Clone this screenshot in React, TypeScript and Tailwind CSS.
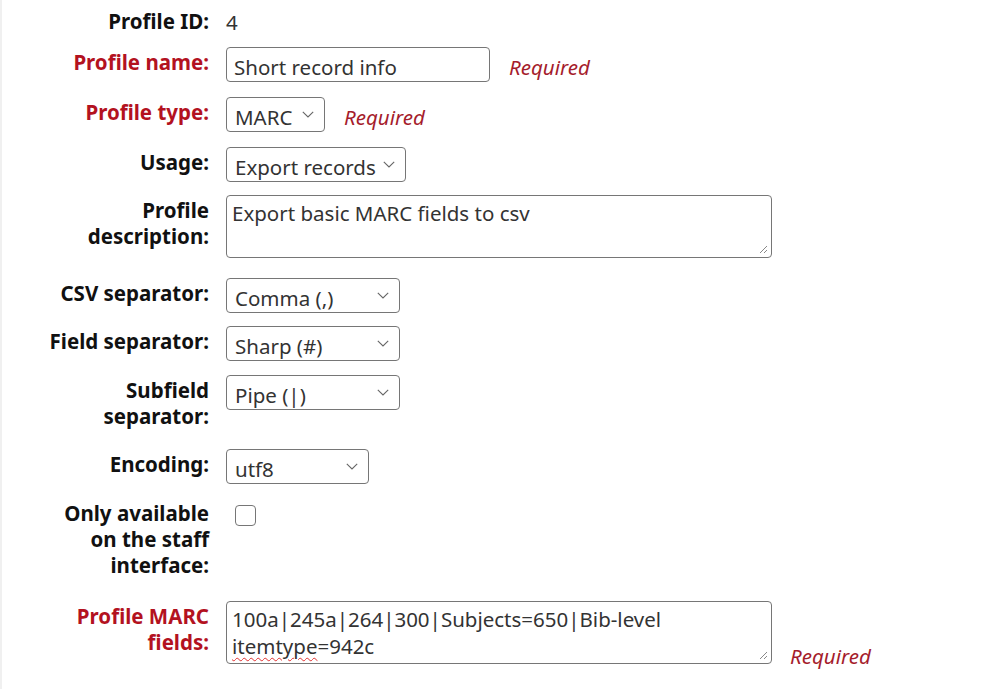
import React from "react";

const FONT = "font-['Noto_Sans','Liberation_Sans',sans-serif]";

function Chevron() {
  return (
    <svg width="12" height="7" viewBox="0 0 12 7" className="shrink-0">
      <polyline points="0.8,0.8 6,6 11.2,0.8" fill="none" stroke="#666" strokeWidth="1.1" />
    </svg>
  );
}

function Grip() {
  return (
    <svg width="10" height="10" viewBox="0 0 10 10" className="absolute right-[3px] bottom-[3px]">
      <line x1="9" y1="2" x2="2" y2="9" stroke="#888" strokeWidth="1" />
      <line x1="9" y1="6" x2="6" y2="9" stroke="#888" strokeWidth="1" />
    </svg>
  );
}

function Required({ className = "" }: { className?: string }) {
  return <span className={`italic text-[#a51c2c] ${className}`}>Required</span>;
}

function Select({ value, width }: { value: string; width: string }) {
  return (
    <div className={`flex h-[35px] items-center justify-between rounded-[4px] border border-[#767676] pl-[8px] pr-[10px] text-[#333] ${width}`}>
      <span className="pt-[4px]">{value}</span>
      <Chevron />
    </div>
  );
}

function Row({
  label,
  required,
  className = "",
  children,
}: {
  label: React.ReactNode;
  required?: boolean;
  className?: string;
  children: React.ReactNode;
}) {
  return (
    <div className={`flex items-start gap-[17px] ${className}`}>
      <div
        className={`w-[207px] shrink-0 pt-[2px] text-right font-bold ${
          required ? "text-[#b3121f]" : "text-[#111]"
        }`}
      >
        {label}
      </div>
      {children}
    </div>
  );
}

export default function App() {
  return (
    <div className={`min-h-[689px] border-l-2 border-[#f0f0f0] bg-white pt-[6px] text-[20.5px] leading-[26px] ${FONT}`}>
      <Row label="Profile ID:">
        <span className="relative top-[3px] text-[#333]">4</span>
      </Row>

      <Row label="Profile name:" required className="mt-[13px]">
        <div className="flex items-center gap-[19px]">
          <div className="flex h-[35px] w-[264px] items-center rounded-[4px] border border-[#767676] px-[7px] pt-[4px] text-[#333]">
            Short record info
          </div>
          <Required className="pt-[4px]" />
        </div>
      </Row>

      <Row label="Profile type:" required className="mt-[15px]">
        <div className="flex items-center gap-[19px]">
          <Select value="MARC" width="w-[99px]" />
          <Required className="pt-[4px]" />
        </div>
      </Row>

      <Row label="Usage:" className="mt-[15px]">
        <Select value="Export records" width="w-[180px]" />
      </Row>

      <Row label={<>Profile<br />description:</>} className="mt-[13px]">
        <div className="relative h-[63px] w-[546px] rounded-[4px] border border-[#767676] px-[5px] pt-[4px] text-[#333]">
          Export basic MARC fields to csv
          <Grip />
        </div>
      </Row>

      <Row label="CSV separator:" className="mt-[20px]">
        <Select value="Comma (,)" width="w-[174px]" />
      </Row>

      <Row label="Field separator:" className="mt-[13px]">
        <Select value="Sharp (#)" width="w-[174px]" />
      </Row>

      <Row label={<>Subfield<br />separator:</>} className="mt-[14px]">
        <Select value="Pipe (|)" width="w-[174px]" />
      </Row>

      <Row label="Encoding:" className="mt-[20px]">
        <Select value="utf8" width="w-[143px]" />
      </Row>

      <Row label={<>Only available<br />on the staff<br />interface:</>} className="mt-[14px]">
        <div className="ml-[9px] mt-[7px] h-[21px] w-[21px] rounded-[4px] border-[1.5px] border-[#767676]" />
      </Row>

      <Row label={<>Profile MARC<br />fields:</>} required className="mt-[23px]">
        <div className="flex items-end gap-[18px]">
          <div className="relative h-[63px] w-[546px] rounded-[4px] border border-[#767676] px-[5px] pt-[4px] leading-[27px] text-[#333]">
            100a|245a|264|300|Subjects=650|Bib-level
            <br />
            <span className="underline decoration-wavy decoration-[#e03131] decoration-1 underline-offset-[3px]">itemtype</span>
            =942c
            <Grip />
          </div>
          <Required className="relative top-[5px]" />
        </div>
      </Row>
    </div>
  );
}
